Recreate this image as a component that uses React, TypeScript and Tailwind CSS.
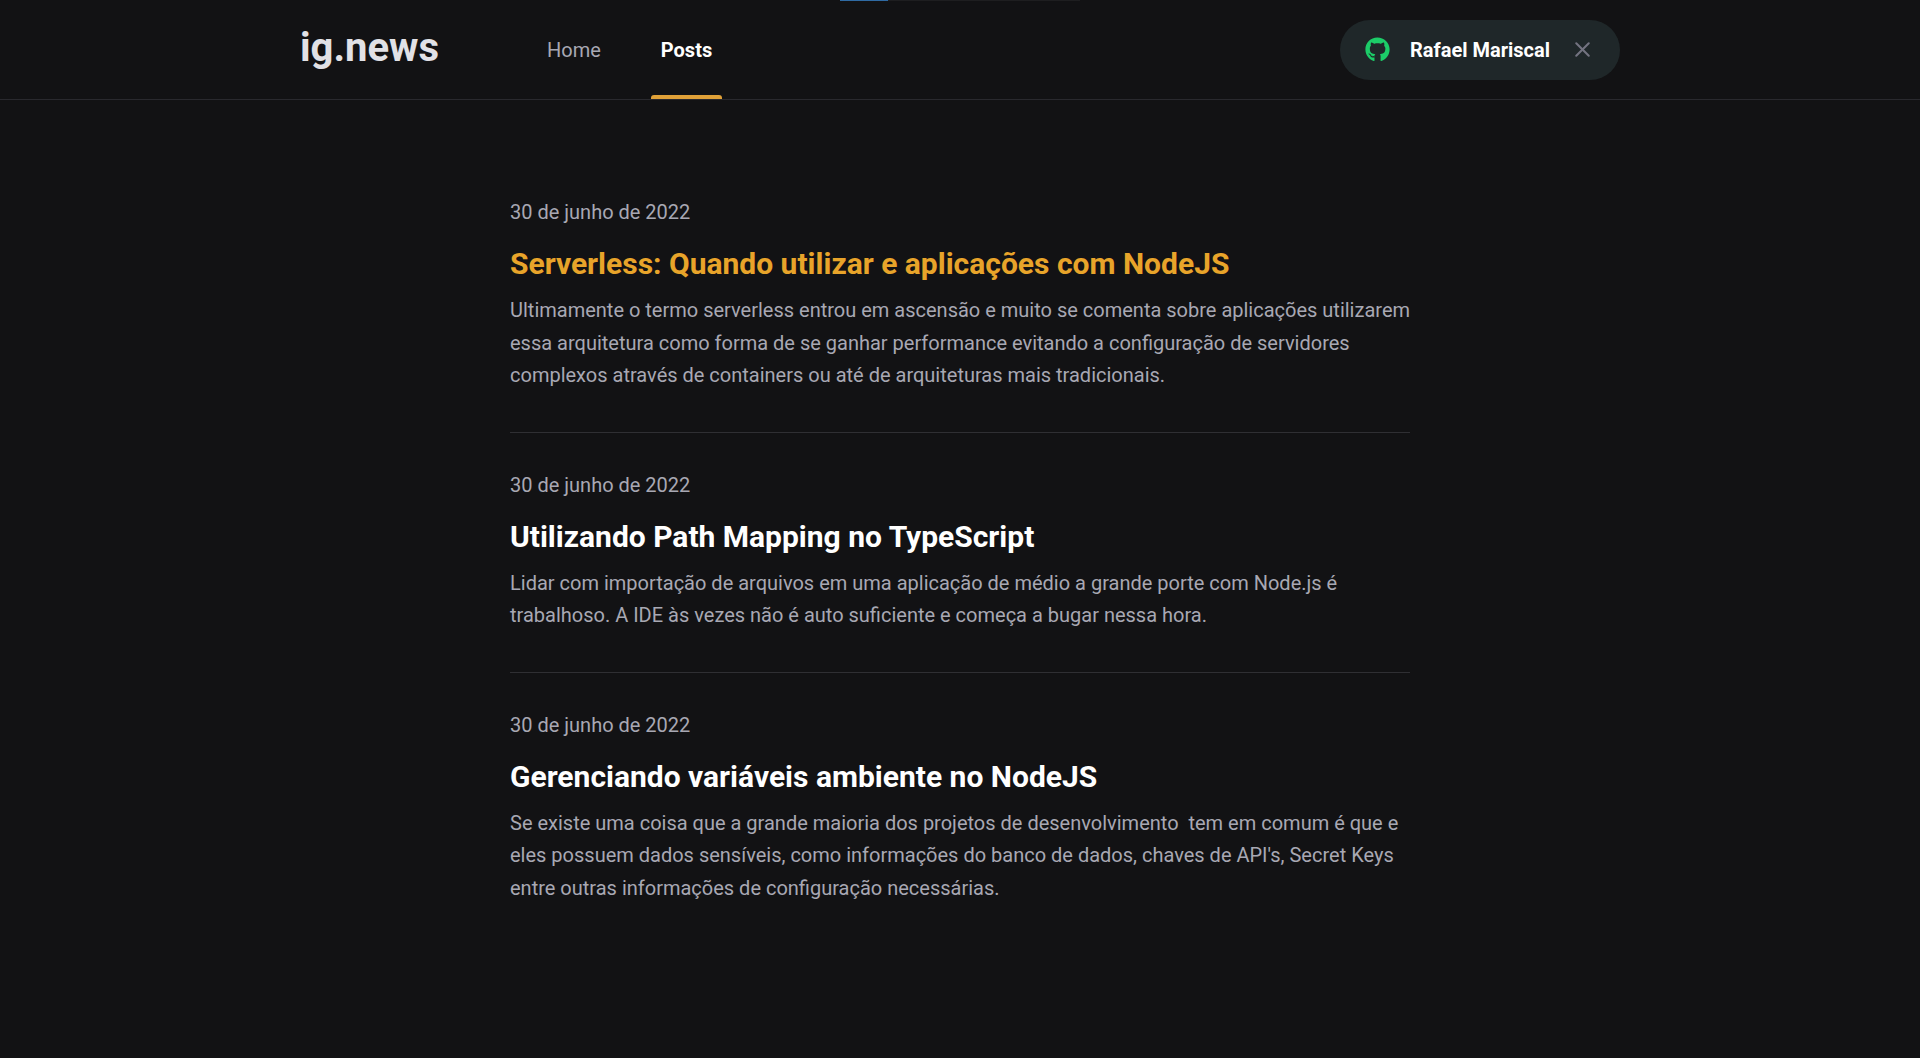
import { FaGithub } from "react-icons/fa";
import { FiX } from "react-icons/fi";

type Post = { title: string; date: string; excerpt: string; active?: boolean };

const posts: Post[] = [
  {
    title: "Serverless: Quando utilizar e aplicações com NodeJS",
    date: "30 de junho de 2022",
    excerpt:
      "Ultimamente o termo serverless entrou em ascensão e muito se comenta sobre aplicações utilizarem essa arquitetura como forma de se ganhar performance evitando a configuração de servidores complexos através de containers ou até de arquiteturas mais tradicionais.",
    active: true,
  },
  {
    title: "Utilizando Path Mapping no TypeScript",
    date: "30 de junho de 2022",
    excerpt:
      "Lidar com importação de arquivos em uma aplicação de médio a grande porte com Node.js é trabalhoso. A IDE às vezes não é auto suficiente e começa a bugar nessa hora.",
  },
  {
    title: "Gerenciando variáveis ambiente no NodeJS",
    date: "30 de junho de 2022",
    excerpt:
      "Se existe uma coisa que a grande maioria dos projetos de desenvolvimento \u00a0tem em comum é que e eles possuem dados sensíveis, como informações do banco de dados, chaves de API's, Secret Keys entre outras informações de configuração necessárias.",
  },
];

function LoadingBar() {
  return (
    <div className="absolute inset-x-0 top-0 flex justify-center">
      <div className="h-px w-60 bg-[#1e1e20]">
        <div className="h-px w-12 bg-[#2f6aa3]" />
      </div>
    </div>
  );
}

function Header() {
  return (
    <header className="border-b border-[#29292e]">
      <div className="mx-auto flex h-[99px] max-w-[1400px] items-center px-10">
        <a href="#" className="pb-1 text-[40px] leading-12 font-bold text-[#e1e1e6]">
          ig.news
        </a>
        <nav className="ml-[98px] flex h-full gap-10">
          <a href="#" className="flex items-center px-[10px] text-[#a8a8b3]">
            Home
          </a>
          <a
            href="#"
            aria-current="page"
            className="relative flex items-center px-[10px] font-bold text-white after:absolute after:inset-x-0 after:bottom-0 after:h-1 after:rounded-t-[3px] after:bg-[#e0a138]"
          >
            Posts
          </a>
        </nav>
        <button
          type="button"
          className="ml-auto flex h-15 items-center gap-5 rounded-full bg-[#1f2729] px-[25px] font-bold text-white"
        >
          <FaGithub className="size-[25px] text-[#1ccc68]" />
          Rafael Mariscal
          <FiX className="size-[25px] text-[#737380]" />
        </button>
      </div>
    </header>
  );
}

function PostItem({ title, date, excerpt, active }: Post) {
  return (
    <a href="#" className="flex flex-col py-10 first:pt-0">
      <time dateTime="2022-06-30" className="leading-6">
        {date}
      </time>
      <strong
        className={
          active
            ? "mt-5 text-3xl leading-10 text-[#e8a42a]"
            : "mt-5 text-3xl leading-10 text-white"
        }
      >
        {title}
      </strong>
      <p className="-mr-1 mt-[10px] leading-relaxed">{excerpt}</p>
    </a>
  );
}

export default function App() {
  return (
    <div className="relative min-h-screen bg-[#121214] font-['Roboto',sans-serif] text-xl text-[#a8a8b3]">
      <LoadingBar />
      <Header />
      <main className="mx-auto mt-[100px] max-w-[900px] divide-y divide-[#2f2f33]">
        {posts.map((post) => (
          <PostItem key={post.title} {...post} />
        ))}
      </main>
    </div>
  );
}
